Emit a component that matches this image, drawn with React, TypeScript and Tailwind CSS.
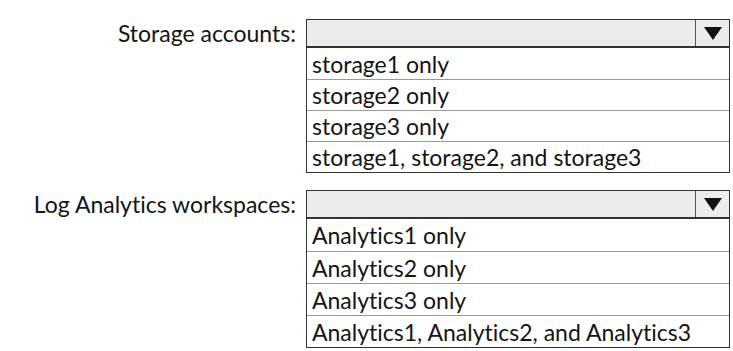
import React from "react";

const groups = [
  {
    label: "Storage accounts:",
    options: ["storage1 only", "storage2 only", "storage3 only", "storage1, storage2, and storage3"],
    rowH: "h-[31px]",
  },
  {
    label: "Log Analytics workspaces:",
    options: ["Analytics1 only", "Analytics2 only", "Analytics3 only", "Analytics1, Analytics2, and Analytics3"],
    rowH: "h-[32px]",
  },
];

function Dropdown({ options, rowH }: { options: string[]; rowH: string }) {
  return (
    <div className="w-[424px]">
      {/* select header */}
      <div className="flex h-[29px] border border-b-2 border-[#333] bg-[#ececec]">
        <div className="flex-1" />
        <div className="flex w-[34px] items-center justify-center border-l border-[#555]">
          <svg width="18" height="13" viewBox="0 0 18 13">
            <path d="M0 0 H18 L9 13 Z" fill="#111" />
          </svg>
        </div>
      </div>
      {/* options */}
      <div className="border border-t-0 border-[#333] bg-white">
        {options.map((o, i) => (
          <div
            key={o}
            className={`flex ${rowH} items-center pl-[5px] pt-[1px] text-[23px] leading-none text-[#141414] ${
              i > 0 ? "border-t border-[#9a9a9a]" : ""
            }`}
          >
            {o}
          </div>
        ))}
      </div>
    </div>
  );
}

export default function App() {
  return (
    <div className="h-[351px] w-[733px] bg-white pt-[19px] font-['Lato','Open_Sans',sans-serif] [font-variant-ligatures:none]">
      <div className="flex flex-col gap-[17px]">
        {groups.map((g) => (
          <div key={g.label} className="flex items-start">
            <div className="w-[296px] pt-[1px] text-right text-[23px] leading-[26px] text-[#141414]">{g.label}</div>
            <div className="ml-[10px]">
              <Dropdown options={g.options} rowH={g.rowH} />
            </div>
          </div>
        ))}
      </div>
    </div>
  );
}
